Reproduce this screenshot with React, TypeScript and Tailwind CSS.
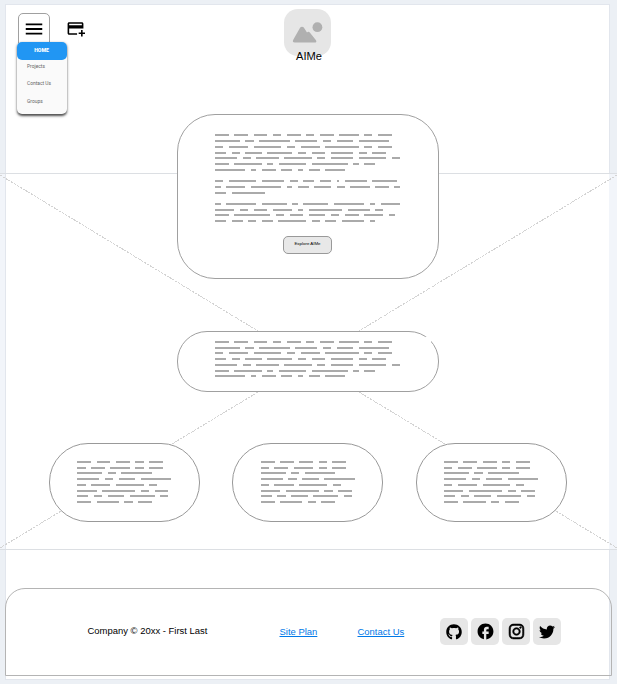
import type { ReactNode } from "react";
import { MdMenu, MdOutlineAddCard, MdFacebook } from "react-icons/md";
import { FaGithub, FaInstagram, FaTwitter } from "react-icons/fa";

// Word lengths, in characters, for each line of placeholder copy.
const INTRO = [
  [5, 5, 5, 3, 5, 3, 5, 7, 3, 5],
  [9, 3, 11, 8, 3, 6, 11],
  [3, 7, 10, 3, 7, 12, 3, 5],
  [4, 3, 6, 9, 3, 5, 8, 3, 5],
  [8, 3, 8, 10, 3, 8, 10, 3],
  [5, 10, 2, 10, 13, 2, 4],
  [11, 2, 5, 4, 2, 4, 7],
];

const DETAILS = [
  [],
  [3, 10, 8, 3, 4, 4, 1, 8, 9],
  [2, 7, 11, 2, 4, 6, 3, 7, 5, 2],
  [4, 12],
  [],
  [2, 11, 9, 2, 9, 11, 2, 7],
  [7, 3, 5, 7, 2, 12, 8, 3],
  [5, 13, 3, 5, 6, 3, 5, 7, 2],
  [4, 4, 3, 4, 10, 3, 4, 8, 2],
];

const SHORT = [
  [5, 5, 5, 3, 5],
  [3, 5, 7, 3, 5],
  [9, 3, 11],
  [8, 3, 6, 11],
  [3, 7, 10, 3],
  [7, 12, 3, 5],
  [4, 3, 6, 9, 3],
  [5, 8, 3, 5],
];

const CHAR = 2.765;

function Copy({ lines }: { lines: number[][] }) {
  return (
    <div className="flex flex-col">
      {lines.map((words, i) => (
        <div key={i} className="flex h-[5.73px] items-start gap-[5.53px]">
          {words.map((n, j) => (
            <span key={j} className="h-[2px] shrink-0 bg-[#aaaaaa]" style={{ width: n * CHAR }} />
          ))}
        </div>
      ))}
    </div>
  );
}

function SmallCard() {
  return (
    <div className="h-[79px] w-[151px] rounded-[39px] border border-[#999999] bg-white pt-[16.95px] pl-[27.3px]">
      <Copy lines={SHORT} />
    </div>
  );
}

function Social({ label, children }: { label: string; children: ReactNode }) {
  return (
    <a aria-label={label} className="flex h-[27px] w-7 items-center justify-center rounded-[5px] bg-[#e6e6e6] text-black">
      {children}
    </a>
  );
}

function Backdrop() {
  return (
    <svg className="absolute top-0 left-0" width="617" height="684" viewBox="0 0 617 684" shapeRendering="crispEdges">
      <rect x="609" y="174" width="8" height="375" fill="#f2f5fa" />
      <rect x="0" y="174" width="5" height="375" fill="#f2f5fa" />
      <path d="M0 173.5H617M0 549.5H617" stroke="#dcdfe3" fill="none" />
      <path d="M0 175L617 548M617 175L0 548" stroke="#d4d4d4" strokeWidth="1" strokeDasharray="2.4 0.9" fill="none" />
    </svg>
  );
}

export default function App() {
  return (
    <div className="relative h-[684px] w-[617px] overflow-hidden bg-[#ecf0f5] pt-1 pl-[5px] font-['Liberation_Sans',Arial,sans-serif]">
      <div className="h-[676px] w-[605px] bg-white ring-1 ring-[#e2e6ed] ring-inset">
        <Backdrop />
        <header className="flex h-[110px] items-start">
          <nav className="relative mt-[9px] ml-[13px] w-8">
            <button className="flex h-8 w-8 items-center justify-center rounded-t-[5px] border border-[#a0a0a0]">
              <MdMenu size={22} className="shrink-0" />
            </button>
            <div className="absolute top-[28.5px] left-[-1px] h-[72.5px] w-[50px] rounded-[5px] bg-[#fafafa] font-['Roboto',sans-serif] text-[4.9px] text-[#666666] shadow-[0_1.5px_2.5px_0_rgba(0,0,0,0.7)]">
              <div className="flex h-[18px] items-center justify-center rounded-[5px] bg-[#2196f3] pr-[1px] text-[5.2px] font-black text-white">
                HOME
              </div>
              <ul className="pl-[10px]">
                <li className="flex h-[14px] items-center">Projects</li>
                <li className="flex h-[21px] items-center">Contact Us</li>
                <li className="flex h-[14px] items-center">Groups</li>
              </ul>
            </div>
          </nav>
          <MdOutlineAddCard size={19} className="mt-[15px] ml-[16px]" />
          <div className="relative mt-[5px] ml-[199px] h-[47px] w-[47px] rounded-[14px] bg-[#e6e6e6]">
            <svg width="47" height="47" viewBox="0 0 47 47" fill="#b0b0b0">
              <circle cx="33.4" cy="18.2" r="4.9" />
              <path d="M16.2 18.6c1-1.3 2.7-1.3 3.6 0l3.2 5c.6-1 2-1.2 2.8 0l6 7.4c1.2 1.6.4 2.6-1.2 2.6H10.8c-2 0-2.4-1.2-1.4-3z" />
            </svg>
            <span className="absolute top-[40px] left-[12.1px] text-[11.1px] leading-[14px] text-black">AIMe</span>
          </div>
        </header>

        <main className="relative flex h-[474px] flex-col">
          <section className="ml-[172px] flex h-[165px] w-[262px] flex-col rounded-[38px] border border-[#a0a0a0] bg-white pt-[19.4px] pl-[37px]">
            <Copy lines={[...INTRO, ...DETAILS]} />
            <button className="mt-[10.5px] ml-[68px] flex h-[18px] w-[49px] shrink-0 items-center justify-center rounded-[5px] border border-[#999999] bg-[#e8e8e8] pb-[3px] text-[4.4px] leading-none text-black">
              Explore AIMe
            </button>
          </section>
          <section className="relative mt-[52px] ml-[172px] h-[61px] w-[262px] rounded-[30px] border border-[#a0a0a0] bg-white pt-[8.95px] pl-[37px]">
            <Copy lines={INTRO} />
            <span className="absolute top-[5px] right-[7px] h-[5px] w-[5px] bg-white" />
          </section>
          <section className="mt-[51px] ml-[44px] flex gap-[32.4px]">
            <SmallCard />
            <SmallCard />
            <SmallCard />
          </section>
        </main>

        <footer className="relative flex h-[88px] w-[607px] items-center rounded-t-[20px] border border-[#b4b4b4] pb-[1px] pl-[81.5px] text-[9.46px] text-black">
          <p className="w-[192px]">Company © 20xx - First Last</p>
          <a className="w-[78px] pt-[1px] text-[#0078e7] underline">Site Plan</a>
          <a className="w-[82.5px] pt-[1px] text-[#0078e7] underline">Contact Us</a>
          <div className="flex gap-[3px]">
            <Social label="GitHub"><FaGithub size={16} /></Social>
            <Social label="Facebook"><MdFacebook size={19} /></Social>
            <Social label="Instagram"><FaInstagram size={17} stroke="currentColor" strokeWidth={18} /></Social>
            <Social label="Twitter"><FaTwitter size={16} /></Social>
          </div>
        </footer>
      </div>
    </div>
  );
}
